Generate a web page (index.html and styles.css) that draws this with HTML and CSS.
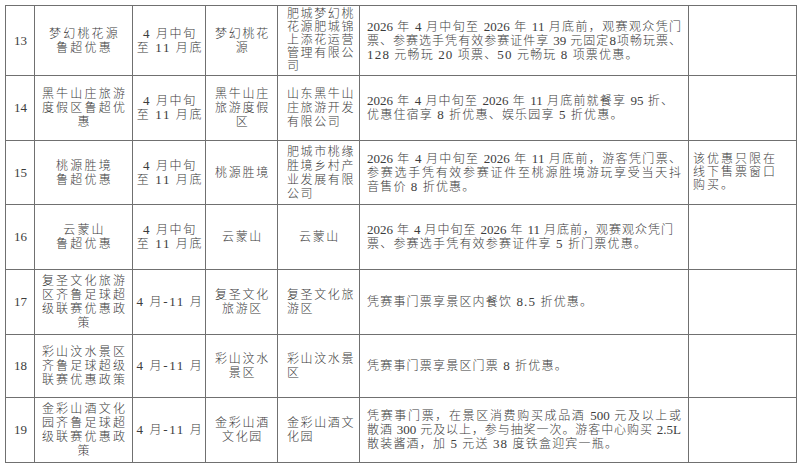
FILE: index.html
```html
<!DOCTYPE html>
<html lang="zh-CN">
<head>
<meta charset="utf-8">
<title>优惠政策表</title>
<link rel="stylesheet" href="styles.css">
</head>
<body>
<table class="grid">
  <colgroup>
    <col class="c1"><col class="c2"><col class="c3"><col class="c4"><col class="c5"><col class="c6"><col class="c7">
  </colgroup>
  <tbody>
    <tr class="r13">
      <td class="num">13</td>
      <td class="name">梦幻桃花源<br>鲁超优惠</td>
      <td class="date"><span class="n">4</span> 月中旬<br>至 <span class="n">11</span> 月底</td>
      <td class="place">梦幻桃花<br>源</td>
      <td class="org tight">肥城梦幻桃<br>花源肥城锦<br>上添花运营<br>管理有限公<br>司</td>
      <td class="desc"><div class="jl"><span class="n">2026</span> 年 <span class="n">4</span> 月中旬至 <span class="n">2026</span> 年 <span class="n">11</span> 月底前，观赛观众凭门</div><div class="jl">票、参赛选手凭有效参赛证件享 <span class="n">39</span> 元固定<span class="n">8</span>项畅玩票、</div><div><span class="n">128</span> 元畅玩 <span class="n">20</span> 项票、<span class="n">50</span> 元畅玩 <span class="n">8</span> 项票优惠。</div></td>
      <td class="note"></td>
    </tr>
    <tr class="r14">
      <td class="num">14</td>
      <td class="name">黑牛山庄旅游<br>度假区鲁超优<br>惠</td>
      <td class="date"><span class="n">4</span> 月中旬<br>至 <span class="n">11</span> 月底</td>
      <td class="place">黑牛山庄<br>旅游度假<br>区</td>
      <td class="org">山东黑牛山<br>庄旅游开发<br>有限公司</td>
      <td class="desc"><div class="jl short"><span class="n">2026</span> 年 <span class="n">4</span> 月中旬至 <span class="n">2026</span> 年 <span class="n">11</span> 月底前就餐享 <span class="n">95</span> 折、</div><div>优惠住宿享 <span class="n">8</span> 折优惠、娱乐园享 <span class="n">5</span> 折优惠。</div></td>
      <td class="note"></td>
    </tr>
    <tr class="r15">
      <td class="num">15</td>
      <td class="name">桃源胜境<br>鲁超优惠</td>
      <td class="date"><span class="n">4</span> 月中旬<br>至 <span class="n">11</span> 月底</td>
      <td class="place">桃源胜境</td>
      <td class="org">肥城市桃缘<br>胜境乡村产<br>业发展有限<br>公司</td>
      <td class="desc"><div class="jl"><span class="n">2026</span> 年 <span class="n">4</span> 月中旬至 <span class="n">2026</span> 年 <span class="n">11</span> 月底前，游客凭门票、</div><div class="jl">参赛选手凭有效参赛证件至桃源胜境游玩享受当天抖</div><div>音售价 <span class="n">8</span> 折优惠。</div></td>
      <td class="note">该优惠只限在<br>线下售票窗口<br>购买。</td>
    </tr>
    <tr class="r16">
      <td class="num">16</td>
      <td class="name">云蒙山<br>鲁超优惠</td>
      <td class="date"><span class="n">4</span> 月中旬<br>至 <span class="n">11</span> 月底</td>
      <td class="place">云蒙山</td>
      <td class="place">云蒙山</td>
      <td class="desc"><div class="jl short"><span class="n">2026</span> 年 <span class="n">4</span> 月中旬至 <span class="n">2026</span> 年 <span class="n">11</span> 月底前，观赛观众凭门</div><div>票、参赛选手凭有效参赛证件享 <span class="n">5</span> 折门票优惠。</div></td>
      <td class="note"></td>
    </tr>
    <tr class="r17">
      <td class="num">17</td>
      <td class="name">复圣文化旅游<br>区齐鲁足球超<br>级联赛优惠政<br>策</td>
      <td class="date"><span class="n">4</span> 月<span class="n">-11</span> 月</td>
      <td class="place">复圣文化<br>旅游区</td>
      <td class="org">复圣文化旅<br>游区</td>
      <td class="desc"><div>凭赛事门票享景区内餐饮 <span class="n">8.5</span> 折优惠。</div></td>
      <td class="note"></td>
    </tr>
    <tr class="r18">
      <td class="num">18</td>
      <td class="name">彩山汶水景区<br>齐鲁足球超级<br>联赛优惠政策</td>
      <td class="date"><span class="n">4</span> 月<span class="n">-11</span> 月</td>
      <td class="place">彩山汶水<br>景区</td>
      <td class="org">彩山汶水景<br>区</td>
      <td class="desc"><div>凭赛事门票享景区门票 <span class="n">8</span> 折优惠。</div></td>
      <td class="note"></td>
    </tr>
    <tr class="r19">
      <td class="num">19</td>
      <td class="name">金彩山酒文化<br>园齐鲁足球超<br>级联赛优惠政<br>策</td>
      <td class="date"><span class="n">4</span> 月<span class="n">-11</span> 月</td>
      <td class="place">金彩山酒<br>文化园</td>
      <td class="org">金彩山酒文<br>化园</td>
      <td class="desc"><div class="jl">凭赛事门票，在景区消费购买成品酒 <span class="n">500</span> 元及以上或</div><div class="jl">散酒 <span class="n">300</span> 元及以上，参与抽奖一次。游客中心购买 <span class="n">2.5L</span></div><div>散装酱酒，加 <span class="n">5</span> 元送 <span class="n">38</span> 度铁盒迎宾一瓶。</div></td>
      <td class="note"></td>
    </tr>
  </tbody>
</table>
</body>
</html>
```

FILE: styles.css
```css
html, body {
  margin: 0;
  padding: 0;
  background: #ffffff;
}

body {
  padding: 5px 0 0 5px;
  font-family: "Liberation Serif", "Noto Sans CJK SC", serif;
  font-size: 12px;
  font-weight: 300;
  color: #3c3c3c;
}

.grid {
  table-layout: fixed;
  width: 792px;
  border-collapse: separate;
  border-spacing: 0;
  border-top: 1px solid #707070;
  border-left: 1px solid #707070;
}

.grid td {
  box-sizing: border-box;
  border-right: 1px solid #707070;
  border-bottom: 1px solid #707070;
  padding: 0;
  vertical-align: middle;
  line-height: 14px;
  overflow: hidden;
}

.c1 { width: 29px; }
.c2 { width: 98px; }
.c3 { width: 73px; }
.c4 { width: 72px; }
.c5 { width: 82px; }
.c6 { width: 329px; }
.c7 { width: 108px; }

.r13 { height: 70px; }
.r14 { height: 65px; }
.r15 { height: 64px; }
.r16 { height: 65px; }
.r17 { height: 65px; }
.r18 { height: 63px; }
.r19 { height: 65px; }

.n {
  font-size: 13px;
}

.grid .num {
  text-align: center;
  font-size: 13px;
  padding-left: 1px;
}

.grid .name {
  text-align: center;
  letter-spacing: 2.2px;
  padding-left: 2px;
}

.grid .date {
  text-align: center;
  letter-spacing: 1.7px;
  padding-left: 2px;
}

.grid .place {
  text-align: center;
  letter-spacing: 1.7px;
  padding-left: 2px;
}

.grid .org {
  text-align: left;
  letter-spacing: 1.6px;
  padding-left: 9px;
}

.grid .tight {
  line-height: 13px;
}

.grid .desc {
  text-align: left;
  padding: 0 7px;
  letter-spacing: 1.2px;
}

.grid .desc .jl {
  white-space: nowrap;
  letter-spacing: 0;
  text-align: justify;
  text-align-last: justify;
}

.grid .desc .jl.short {
  margin-right: 8px;
}

.grid .note {
  text-align: left;
  letter-spacing: 2px;
  padding-left: 4px;
  line-height: 13.3px;
}
```
